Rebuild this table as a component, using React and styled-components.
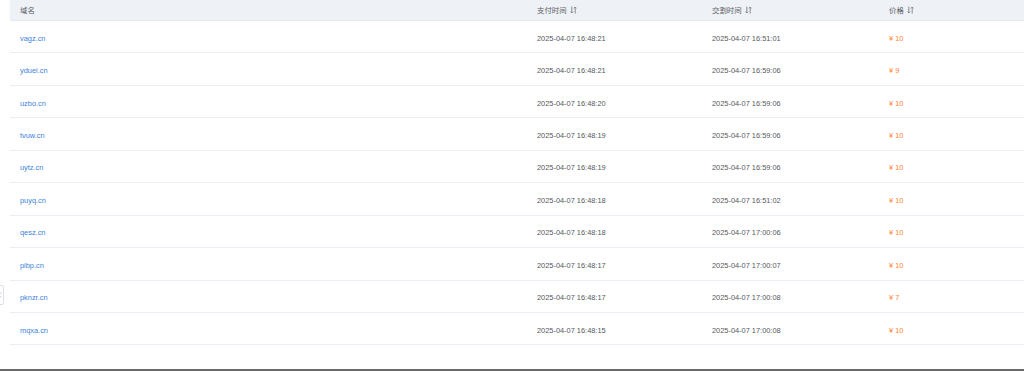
import React from "react";
import styled, { createGlobalStyle } from "styled-components";

const GlobalStyle = createGlobalStyle`
  html, body {
    margin: 0;
    padding: 0;
    background: #fff;
    font-family: "Liberation Sans", "Noto Sans CJK SC", sans-serif;
  }
`;

const rows = [
  { name: "vagz.cn", pay: "2025-04-07 16:48:21", deliver: "2025-04-07 16:51:01", price: 10 },
  { name: "yduei.cn", pay: "2025-04-07 16:48:21", deliver: "2025-04-07 16:59:06", price: 9 },
  { name: "uzbo.cn", pay: "2025-04-07 16:48:20", deliver: "2025-04-07 16:59:06", price: 10 },
  { name: "tvuw.cn", pay: "2025-04-07 16:48:19", deliver: "2025-04-07 16:59:06", price: 10 },
  { name: "uytz.cn", pay: "2025-04-07 16:48:19", deliver: "2025-04-07 16:59:06", price: 10 },
  { name: "puyq.cn", pay: "2025-04-07 16:48:18", deliver: "2025-04-07 16:51:02", price: 10 },
  { name: "qesz.cn", pay: "2025-04-07 16:48:18", deliver: "2025-04-07 17:00:06", price: 10 },
  { name: "pibp.cn", pay: "2025-04-07 16:48:17", deliver: "2025-04-07 17:00:07", price: 10 },
  { name: "pknzr.cn", pay: "2025-04-07 16:48:17", deliver: "2025-04-07 17:00:08", price: 7 },
  { name: "mqxa.cn", pay: "2025-04-07 16:48:15", deliver: "2025-04-07 17:00:08", price: 10 },
];

const SortIcon = () => (
  <svg width="7" height="8" viewBox="0 0 7 8" fill="none" stroke="#7d8088" strokeWidth="0.9">
    <path d="M1.8 0.5 V7 M0.5 5.6 L1.8 7 L3.1 5.6" />
    <path d="M5.2 7.5 V1 M3.9 2.4 L5.2 1 L6.5 2.4" />
  </svg>
);

const App = () => {
  return (
    <Page>
      <GlobalStyle />
      <SideTab>
        <svg width="4" height="6" viewBox="0 0 4 6" fill="none" stroke="#b0b3b8" strokeWidth="0.8">
          <path d="M3 0.5 L0.8 3 L3 5.5" />
        </svg>
      </SideTab>
      <Table>
        <HeadRow>
          <HeadCell>域名</HeadCell>
          <HeadCell>支付时间 <SortIcon /></HeadCell>
          <HeadCell>交割时间 <SortIcon /></HeadCell>
          <HeadCell>价格 <SortIcon /></HeadCell>
        </HeadRow>
        {rows.map((r) => (
          <Row key={r.name}>
            <Cell><Domain>{r.name}</Domain></Cell>
            <Cell>{r.pay}</Cell>
            <Cell>{r.deliver}</Cell>
            <Cell><Price>¥ {r.price}</Price></Cell>
          </Row>
        ))}
      </Table>
      <Spacer />
      <BottomBar />
    </Page>
  );
};

const Page = styled.div`
  position: relative;
  height: 371px;
  display: flex;
  flex-direction: column;
  overflow: hidden;
`;

const Table = styled.div`
  margin-left: 10px;
  display: flex;
  flex-direction: column;
`;

const cols = `517px 175px 177px 1fr`;

const HeadRow = styled.div`
  display: grid;
  grid-template-columns: ${cols};
  height: 21px;
  background: #eef1f6;
  border-bottom: 1px solid #e6e9ef;
  box-sizing: border-box;
`;

const HeadCell = styled.div`
  display: flex;
  align-items: center;
  gap: 3px;
  padding: 0 0 1px 10px;
  font-size: 7.4px;
  color: #5a5d63;
`;

const Row = styled.div`
  display: grid;
  grid-template-columns: ${cols};
  height: 32.45px;
  border-bottom: 1px solid #ebeef5;
  box-sizing: border-box;
`;

const Cell = styled.div`
  display: flex;
  align-items: center;
  padding: 3px 0 0 10px;
  font-size: 7.4px;
  color: #55585e;
`;

const Domain = styled.span`
  color: #3b82dc;
`;

const Price = styled.span`
  color: #ff8533;
`;

const Spacer = styled.div`
  flex: 1;
`;

const BottomBar = styled.div`
  height: 2px;
  background: #6b6b6b;
`;

const SideTab = styled.div`
  position: absolute;
  left: -12px;
  top: 285px;
  width: 16px;
  height: 20px;
  border: 1px solid #dcdfe6;
  border-radius: 2px;
  background: #fff;
  display: flex;
  align-items: center;
  justify-content: flex-end;
  padding-right: 1px;
  box-sizing: border-box;
`;

export default App;
